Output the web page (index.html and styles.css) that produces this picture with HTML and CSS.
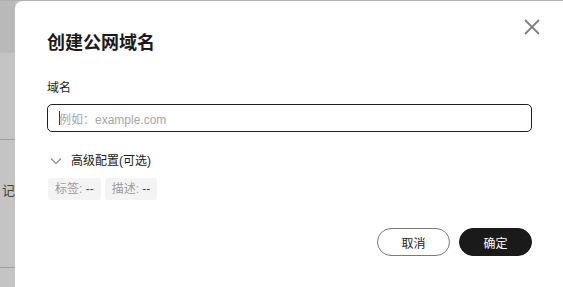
FILE: index.html
```html
<!DOCTYPE html>
<html lang="zh">
<head>
<meta charset="utf-8">
<link rel="stylesheet" href="styles.css">
</head>
<body>
<div class="page">
  <div class="side">
    <div class="side-top"></div>
    <div class="side-row r1"></div>
    <div class="side-row r2"><span class="side-text">记</span></div>
    <div class="side-row r3"></div>
  </div>
  <div class="dialog">
    <button class="close" aria-label="关闭">
      <svg width="18" height="18" viewBox="0 0 18 18"><path d="M2 2L16 16M16 2L2 16" stroke="#808080" stroke-width="1.8" fill="none"/></svg>
    </button>
    <h1 class="title">创建公网域名</h1>
    <div class="label">域名</div>
    <div class="input"><span class="caret"></span><span class="ph">例如：example.com</span></div>
    <div class="adv">
      <svg class="chev" width="12" height="8" viewBox="0 0 12 8"><path d="M1 1.5L6 6.5L11 1.5" stroke="#8a8a8a" stroke-width="1.2" fill="none"/></svg>
      <span>高级配置(可选)</span>
    </div>
    <div class="tags">
      <span class="tag"><span class="k">标签:</span> --</span>
      <span class="tag"><span class="k">描述:</span> --</span>
    </div>
    <div class="actions">
      <button class="btn cancel">取消</button>
      <button class="btn ok">确定</button>
    </div>
  </div>
</div>
</body>
</html>
```
FILE: styles.css
```css
* { box-sizing: border-box; }
html, body { margin: 0; padding: 0; }
body {
  width: 563px; height: 287px; overflow: hidden;
  background: #c2c2c2;
  font-family: "Liberation Sans", "Noto Sans CJK SC", sans-serif;
  color: #1a1a1a;
}
.page { display: flex; height: 287px; border-top: 1px solid #b0b0b0; }
.side { width: 15px; flex: none; display: flex; flex-direction: column; background: #c4c4c4; }
.side-top { height: 52px; background: #b9b9b9; }
.side-row { border-bottom: 1px solid #9e9e9e; }
.r1 { height: 87px; }
.r2 { height: 128px; position: relative; }
.side-text { position: absolute; left: 2px; top: 42px; font-size: 13px; color: #4a4236; line-height: 16px; font-family: "Noto Sans CJK SC", sans-serif; }
.r3 { flex: 1; border: none; }
.dialog {
  flex: 1; background: #fff; border-top-left-radius: 8px;
  padding: 23px 31px 0 32px; position: relative;
}
.close {
  position: absolute; right: 22px; top: 17px; width: 18px; height: 18px;
  padding: 0; border: none; background: none;
}
.title { margin: 0; font-size: 18px; font-weight: 700; line-height: 34px; color: #1a1a1a; font-family: "Noto Sans CJK SC", sans-serif; }
.label { margin-top: 20px; font-size: 12px; line-height: 18px; color: #1a1a1a; font-family: "Noto Sans CJK SC", sans-serif; }
.input {
  margin-top: 8px; height: 28px; border: 1px solid #1f1f1f; border-radius: 5px;
  display: flex; align-items: center; padding-left: 11px;
}
.caret { width: 1px; height: 14px; background: #333; margin-right: -1px; }
.ph { font-size: 12px; color: #a6a6a6; }
.adv { margin-top: 20px; display: flex; align-items: center; font-size: 12px; line-height: 18px; color: #1a1a1a; }
.chev { margin-left: 3px; margin-right: 9px; }
.tags { margin-top: 8px; display: flex; gap: 4px; margin-left: 1px; }
.tag {
  height: 22px; padding: 0 7px; background: #f4f4f4; border-radius: 3px;
  font-size: 12px; line-height: 22px; color: #4d4d4d;
}
.tag .k { color: #9a9a9a; }
.actions { margin-top: 28px; display: flex; justify-content: flex-end; gap: 9px; }
.btn {
  width: 73px; height: 28px; border-radius: 14px; font-size: 12px;
  font-family: "Noto Sans CJK SC", sans-serif; padding: 0;
}
.cancel { background: #fff; border: 1px solid #7a7a7a; color: #1a1a1a; }
.ok { background: #1a1a1a; border: 1px solid #1a1a1a; color: #fff; }
```
